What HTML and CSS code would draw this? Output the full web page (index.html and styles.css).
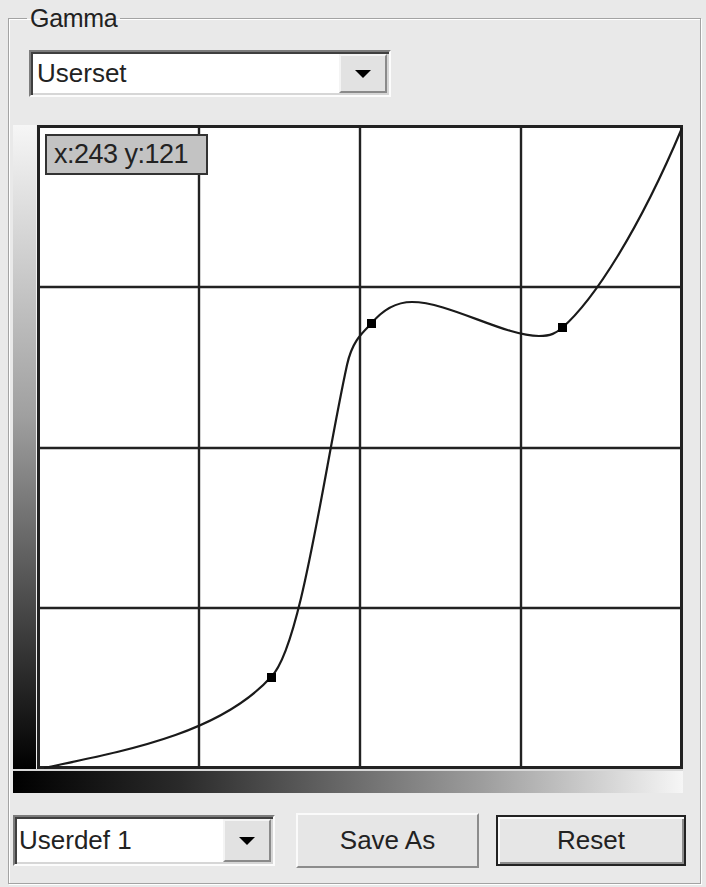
FILE: index.html
```html
<!DOCTYPE html>
<html lang="en">
<head>
    <meta charset="UTF-8">
    <title>Gamma</title>
    <link rel="stylesheet" href="styles.css">
</head>
<body>
    <fieldset class="group">
        <legend class="group-title">Gamma</legend>

        <div class="combo combo-top">
            <span class="combo-text">Userset</span>
            <span class="combo-button"><span class="arrow"></span></span>
        </div>

        <div class="plot">
            <div class="ramp-left"></div>
            <div class="graph">
                <svg class="graph-svg" width="646" height="644" viewBox="38 125 646 644">
                    <rect x="38" y="125" width="646" height="644" fill="#fff"/>
                    <g stroke="#222" stroke-width="2.4">
                        <line x1="200" y1="125" x2="200" y2="769"/>
                        <line x1="361" y1="125" x2="361" y2="769"/>
                        <line x1="522" y1="125" x2="522" y2="769"/>
                        <line x1="38" y1="287" x2="684" y2="287"/>
                        <line x1="38" y1="448" x2="684" y2="448"/>
                        <line x1="38" y1="608" x2="684" y2="608"/>
                    </g>
                    <rect x="39.5" y="126.5" width="643" height="641" fill="none" stroke="#222" stroke-width="3"/>
                    <!-- gamma curve through the three user points -->
                    <path d="M45,768 C120,752 220,735 272,677 C302,648 325,470 348,365 C353,342 362,334 372,324 C385,308 398,302 413,302 C450,302 505,336 540,336 C552,336 557,333 563,328 C595,300 640,230 683,128"
                          fill="none" stroke="#1a1a1a" stroke-width="2.2"/>
                    <g fill="#000">
                        <rect x="268" y="673" width="9" height="9"/>
                        <rect x="368" y="319" width="9" height="9"/>
                        <rect x="559" y="323" width="9" height="9"/>
                    </g>
                </svg>
                <div class="coords">x:243 y:121</div>
            </div>
            <div class="ramp-bottom"></div>
        </div>

        <div class="actions">
            <div class="combo combo-bottom">
                <span class="combo-text">Userdef 1</span>
                <span class="combo-button"><span class="arrow"></span></span>
            </div>
            <button class="btn btn-save">Save As</button>
            <button class="btn btn-default">Reset</button>
        </div>
    </fieldset>
</body>
</html>
```
FILE: styles.css
```css
body {
    margin: 0;
    width: 706px;
    height: 887px;
    background-color: #e9e9e9;
    font-family: "Liberation Sans", Arial, sans-serif;
    color: #1a1a1a;
    overflow: hidden;
}
.group {
    margin: 5px 0 0 8px;
    padding: 0;
    width: 693px;
    height: 879px;
    box-sizing: border-box;
    border: 1px solid #a3a3a3;
    box-shadow: inset 1px 1px #fff, 1px 1px #fff;
}
.group-title {
    margin-left: 18px;
    padding: 0 3px;
    font-size: 25px;
    line-height: 26px;
    letter-spacing: -0.3px;
    color: #222;
}
.combo {
    display: flex;
    align-items: center;
    justify-content: space-between;
    box-sizing: border-box;
    background-color: #fff;
    border: 2px solid;
    border-color: #7c7c7c #fcfcfc #fcfcfc #7c7c7c;
    box-shadow: inset 2px 2px #3f3f3f, inset -2px -2px #d6d6d6;
}
.combo-top {
    margin: 19px 0 0 20px;
    width: 362px;
    height: 47px;
}
.combo-text {
    padding-left: 6px;
    font-size: 26px;
    color: #222;
}
.combo-button {
    display: flex;
    align-items: center;
    justify-content: center;
    box-sizing: border-box;
    width: 48px;
    height: calc(100% - 4px);
    margin-right: 2px;
    background-color: #e2e2e2;
    border: 2px solid;
    border-color: #f4f4f4 #8a8a8a #8a8a8a #f4f4f4;
}
.arrow {
    width: 0;
    height: 0;
    border-left: 8px solid transparent;
    border-right: 8px solid transparent;
    border-top: 8px solid #000;
}
.plot {
    display: grid;
    grid-template-columns: 24px 646px;
    grid-template-rows: 644px 24px;
    margin: 28px 0 0 4px;
}
.ramp-left {
    background: linear-gradient(to bottom, #f6f6f6, #a0a0a0 45%, #000);
    border-right: 1px solid #f0f0f0;
}
.ramp-bottom {
    grid-column: 1 / 3;
    background: linear-gradient(to right, #000, #2a2a2a 25%, #9d9d9d 70%, #f6f6f6);
    border-top: 2px solid #d8d8d8;
}
.graph {
    position: relative;
}
.graph-svg {
    display: block;
}
.coords {
    position: absolute;
    left: 8px;
    top: 9px;
    width: 163px;
    height: 41px;
    box-sizing: border-box;
    padding-left: 7px;
    background-color: #c3c3c3;
    border: 2px solid #333;
    font-size: 27px;
    line-height: 37px;
    letter-spacing: -0.5px;
    color: #222;
}
.actions {
    display: flex;
    align-items: center;
    margin: 20px 0 0 4px;
}
.combo-bottom {
    width: 262px;
    height: 51px;
}
.combo-bottom .combo-text {
    padding-left: 4px;
}
.btn {
    box-sizing: border-box;
    background-color: #e6e6e6;
    font-family: "Liberation Sans", Arial, sans-serif;
    font-size: 26px;
    color: #222;
    padding: 0;
    cursor: pointer;
}
.btn-save {
    margin-left: 21px;
    width: 183px;
    height: 55px;
    border: 2px solid;
    border-color: #fafafa #8c8c8c #8c8c8c #fafafa;
}
.btn-default {
    margin-left: 17px;
    width: 190px;
    height: 51px;
    border: 2px solid #222;
    box-shadow: inset 2px 2px #fafafa, inset -2px -2px #8c8c8c;
}
```
